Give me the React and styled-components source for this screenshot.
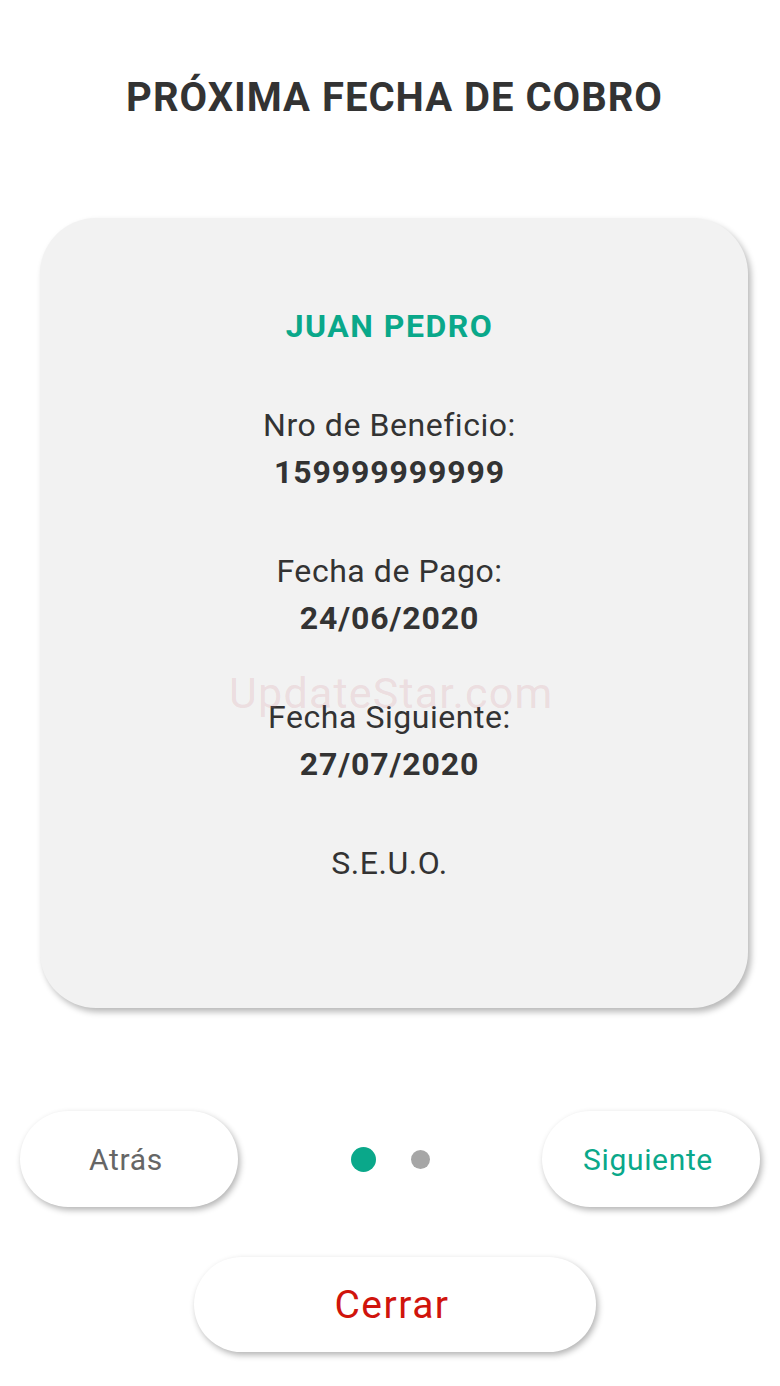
import React from "react";
import styled, { createGlobalStyle } from "styled-components";

const GlobalStyle = createGlobalStyle`
  html, body { margin: 0; padding: 0; background: #ffffff; }
  body { font-family: Roboto, "Liberation Sans", Arial, sans-serif; }
  * { box-sizing: border-box; }
`;

const Page = styled.div`
  width: 780px;
  height: 1386px;
  display: flex;
  flex-direction: column;
  align-items: center;
  background: #fff;
  overflow: hidden;
`;

const Title = styled.h1`
  margin: 75px 0 0;
  padding-left: 9px;
  font-size: 40px;
  line-height: 46px;
  letter-spacing: 1px;
  font-weight: 700;
  color: #333333;
  text-align: center;
`;

const Card = styled.section`
  position: relative;
  margin-top: 97px;
  align-self: flex-start;
  margin-left: 40px;
  width: 708px;
  height: 790px;
  background: #f2f2f2;
  border-radius: 56px;
  box-shadow: 3px 4px 6px rgba(0, 0, 0, 0.28);
  padding-top: 85px;
  padding-right: 9px;
  display: flex;
  flex-direction: column;
  align-items: center;
  gap: 52px;
`;

const Name = styled.div`
  font-size: 32px;
  line-height: 47px;
  letter-spacing: 1.5px;
  font-weight: 700;
  color: #0aa88a;
`;

const Group = styled.div`
  display: flex;
  flex-direction: column;
  align-items: center;
`;

const Label = styled.div`
  font-size: 32px;
  line-height: 47px;
  letter-spacing: 0.55px;
  font-weight: 400;
  color: #333333;
`;

const Value = styled.div`
  font-size: 32px;
  line-height: 47px;
  letter-spacing: 0.9px;
  font-weight: 700;
  color: #333333;
`;

const Watermark = styled.div`
  position: absolute;
  left: 189px;
  top: 450px;
  font-size: 43px;
  line-height: 50px;
  letter-spacing: 1.2px;
  color: rgba(205, 120, 130, 0.18);
  pointer-events: none;
`;

const NavRow = styled.div`
  margin-top: 103px;
  width: 100%;
  padding: 0 20px;
  display: flex;
  align-items: center;
  justify-content: space-between;
`;

const PillButton = styled.button`
  width: ${(p) => p.$w}px;
  height: ${(p) => p.$h}px;
  border: none;
  border-radius: 50px;
  background: #ffffff;
  box-shadow: 2px 3px 6px rgba(0, 0, 0, 0.3);
  font-family: Roboto, "Liberation Sans", Arial, sans-serif;
  font-size: ${(p) => p.$fs}px;
  letter-spacing: ${(p) => p.$ls}px;
  color: ${(p) => p.$color};
  display: flex;
  align-items: center;
  justify-content: center;
  padding: 0 6px 0 0;
`;

const Dots = styled.div`
  display: flex;
  align-items: center;
  gap: 35px;
`;

const Dot = styled.span`
  display: block;
  width: ${(p) => (p.$active ? 25 : 19)}px;
  height: ${(p) => (p.$active ? 25 : 19)}px;
  border-radius: 50%;
  background: ${(p) => (p.$active ? "#0aa88a" : "#a6a6a6")};
`;

const CloseRow = styled.div`
  margin-top: 50px;
  margin-left: 10px;
  display: flex;
  justify-content: center;
`;

export default function App() {
  return (
    <Page>
      <GlobalStyle />
      <Title>PRÓXIMA FECHA DE COBRO</Title>
      <Card>
        <Name>JUAN PEDRO</Name>
        <Group>
          <Label>Nro de Beneficio:</Label>
          <Value>159999999999</Value>
        </Group>
        <Group>
          <Label>Fecha de Pago:</Label>
          <Value>24/06/2020</Value>
        </Group>
        <Group>
          <Label>Fecha Siguiente:</Label>
          <Value>27/07/2020</Value>
        </Group>
        <Label>S.E.U.O.</Label>
        <Watermark>UpdateStar.com</Watermark>
      </Card>
      <NavRow>
        <PillButton $w={218} $h={96} $fs={30} $ls={0.7} $color="#666666">Atrás</PillButton>
        <Dots>
          <Dot $active />
          <Dot />
        </Dots>
        <PillButton $w={218} $h={96} $fs={30} $ls={0.65} $color="#0aa88a">Siguiente</PillButton>
      </NavRow>
      <CloseRow>
        <PillButton $w={402} $h={95} $fs={39} $ls={1.5} $color="#d0140c">Cerrar</PillButton>
      </CloseRow>
    </Page>
  );
}
